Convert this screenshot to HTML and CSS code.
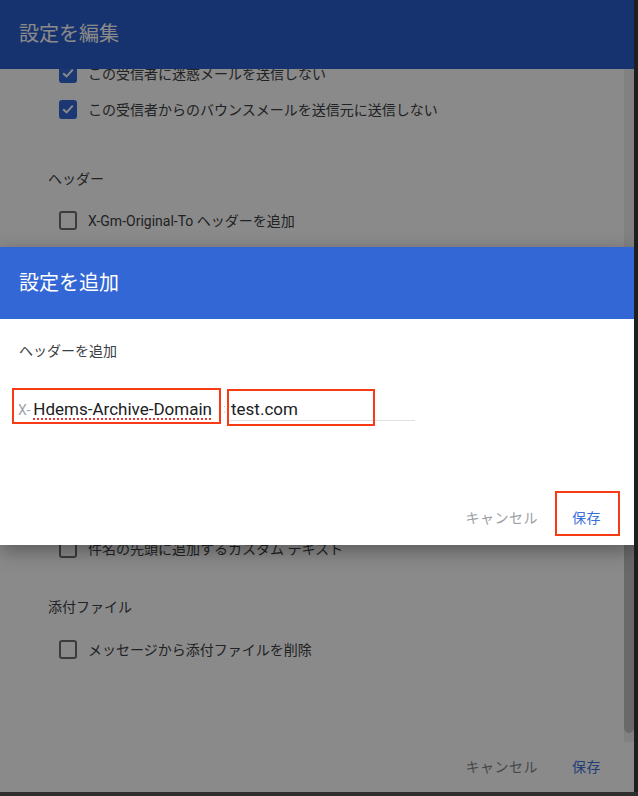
FILE: index.html
```
<!DOCTYPE html>
<html lang="ja">
<head>
<meta charset="utf-8">
<title>設定を追加</title>
<link rel="stylesheet" href="styles.css">
</head>
<body>
<div class="screen">
  <div class="app">
    <div class="app-header">設定を編集</div>
    <div class="app-scroll">
      <div class="scroll-content">
        <div class="row"><span class="checkbox checked"><svg viewBox="0 0 14 14" width="14" height="14"><path d="M2.2 7.2 L5.6 10.4 L11.8 3.6" fill="none" stroke="#fff" stroke-width="2"/></svg></span><span>この受信者に迷惑メールを送信しない</span></div>
        <div class="row"><span class="checkbox checked"><svg viewBox="0 0 14 14" width="14" height="14"><path d="M2.2 7.2 L5.6 10.4 L11.8 3.6" fill="none" stroke="#fff" stroke-width="2"/></svg></span><span>この受信者からのバウンスメールを送信元に送信しない</span></div>
        <div class="section-title">ヘッダー</div>
        <div class="row after-title"><span class="checkbox"></span><span>X-Gm-Original-To ヘッダーを追加</span></div>
        <div class="custom-headers"></div>
        <div class="row"><span class="checkbox"></span><span>件名の先頭に追加するカスタム テキスト</span></div>
        <div class="section-title attach-title">添付ファイル</div>
        <div class="row after-attach"><span class="checkbox"></span><span>メッセージから添付ファイルを削除</span></div>
      </div>
      <div class="scrollbar"><div class="thumb"></div></div>
    </div>
    <div class="app-footer">
      <button class="btn btn-cancel">キャンセル</button>
      <button class="btn btn-save">保存</button>
    </div>

    <div class="overlay"></div>

    <div class="dialog">
      <div class="dialog-header">設定を追加</div>
      <div class="dialog-body">
        <div class="dialog-label">ヘッダーを追加</div>
        <div class="field-row">
          <div class="name-box"><span class="prefix">X-</span><span class="name">Hdems-Archive-Domain</span></div>
          <span class="colon">:</span>
          <div class="value-field"><span class="value">test.com</span><span class="mark mark-value"></span></div>
        </div>
        <div class="dialog-actions">
          <button class="btn btn-cancel light">キャンセル</button>
          <div class="save-wrap"><button class="btn btn-save bright">保存</button><span class="mark mark-save"></span></div>
        </div>
      </div>
    </div>
  </div>
  <div class="edge"></div>
</div>
</body>
</html>
```

FILE: styles.css
```
* { box-sizing: border-box; }
html, body { margin: 0; padding: 0; }
body {
  width: 638px;
  height: 796px;
  overflow: hidden;
  background: #2e2e2e;
  font-family: Roboto, "Noto Sans CJK JP", sans-serif;
}
.screen { display: flex; height: 792px; }
.app {
  position: relative;
  width: 634px;
  height: 792px;
  background: #fff;
  display: flex;
  flex-direction: column;
  overflow: hidden;
}
.edge { width: 4px; background: #1e1e1e; }

.app-header {
  flex: none;
  height: 69px;
  background: #2b5ecd;
  color: #fff;
  font-size: 20px;
  display: flex;
  align-items: center;
  padding: 0 0 5px 19px;
}
.app-scroll { flex: 1; min-height: 0; display: flex; overflow: hidden; }
.scroll-content { flex: 1; margin-top: -14px; }
.scrollbar {
  flex: none;
  width: 10px;
  background: #efefef;
  display: flex;
  flex-direction: column;
  justify-content: flex-end;
}
.thumb { height: 420px; margin-bottom: 9px; background: #c2c2c2; border-radius: 5px; }

.row {
  display: flex;
  align-items: center;
  gap: 11px;
  height: 36px;
  padding-left: 59px;
  font-size: 14px;
  color: #3c4043;
  white-space: nowrap;
}
.row.after-title { margin-top: 6px; }
.row.after-attach { margin-top: 7px; }
.section-title {
  height: 36px;
  display: flex;
  align-items: center;
  margin-top: 33px;
  padding-left: 48px;
  font-size: 14px;
  color: #3c4043;
}
.section-title.attach-title { margin-top: 22px; }
.custom-headers { height: 292px; }

.checkbox {
  flex: none;
  width: 18px;
  height: 19px;
  border: 2px solid #6b6f73;
  border-radius: 3px;
  display: flex;
  align-items: center;
  justify-content: center;
}
.checkbox.checked { background: #3367d6; border-color: #3367d6; }

.app-footer {
  flex: none;
  height: 50px;
  display: flex;
  justify-content: flex-end;
  align-items: center;
  gap: 2px;
  padding: 0 17px 2px 0;
}
.btn {
  height: 36px;
  padding: 0 16px;
  background: none;
  border: 0;
  font-family: Roboto, "Noto Sans CJK JP", sans-serif;
  font-size: 14px;
  letter-spacing: 0.5px;
}
.btn-cancel { color: #80868b; }
.btn-save { color: #3f73e0; }
.btn-cancel.light { color: #9aa0a6; }
.btn-save.bright { color: #3b6fdc; }

.overlay {
  position: absolute;
  inset: 0;
  background: rgba(0, 0, 0, 0.46);
  z-index: 5;
}

.dialog {
  position: absolute;
  top: 247px;
  left: 0;
  width: 634px;
  height: 298px;
  background: #fff;
  display: flex;
  flex-direction: column;
  z-index: 10;
  box-shadow: 0 6px 18px rgba(0, 0, 0, 0.35);
}
.dialog-header {
  flex: none;
  height: 72px;
  background: #3367d6;
  color: #fff;
  font-size: 20px;
  display: flex;
  align-items: center;
  padding: 0 0 3px 19px;
}
.dialog-body { flex: 1; display: flex; flex-direction: column; }
.dialog-label {
  padding: 20px 0 0 19px;
  line-height: 24px;
  font-size: 14px;
  color: #3c4043;
}
.field-row { display: flex; align-items: flex-start; margin-top: 25px; padding-left: 12px; }
.name-box {
  width: 209px;
  height: 36px;
  border: 2px solid #f73b16;
  padding: 8px 0 2px 4px;
  display: flex;
  align-items: baseline;
  white-space: nowrap;
}
.prefix { font-size: 14px; line-height: 22px; color: #a0a4a8; margin-right: 3px; }
.name {
  font-size: 17px;
  line-height: 22px;
  color: #202124;
  text-decoration: underline dotted #e53935;
  text-decoration-thickness: 1.5px;
  text-underline-offset: 3px;
}
.colon {
  width: 7px;
  margin-top: 10px;
  text-align: center;
  font-size: 12px;
  line-height: 22px;
  color: #cfcfcf;
}
.value-field {
  position: relative;
  width: 187px;
  height: 23px;
  margin-top: 10px;
  padding-left: 3px;
  border-bottom: 1px solid #e0e0e0;
  font-size: 17px;
  line-height: 22px;
  color: #202124;
}
.mark { position: absolute; border: 2px solid #f73b16; }
.mark-value { left: -1px; top: -9px; width: 148px; height: 37px; }
.dialog-actions {
  margin-top: auto;
  display: flex;
  justify-content: flex-end;
  align-items: center;
  gap: 2px;
  padding: 0 17px 10px 0;
}
.save-wrap { position: relative; }
.mark-save { left: -1px; top: -8px; width: 65px; height: 45px; }
```
